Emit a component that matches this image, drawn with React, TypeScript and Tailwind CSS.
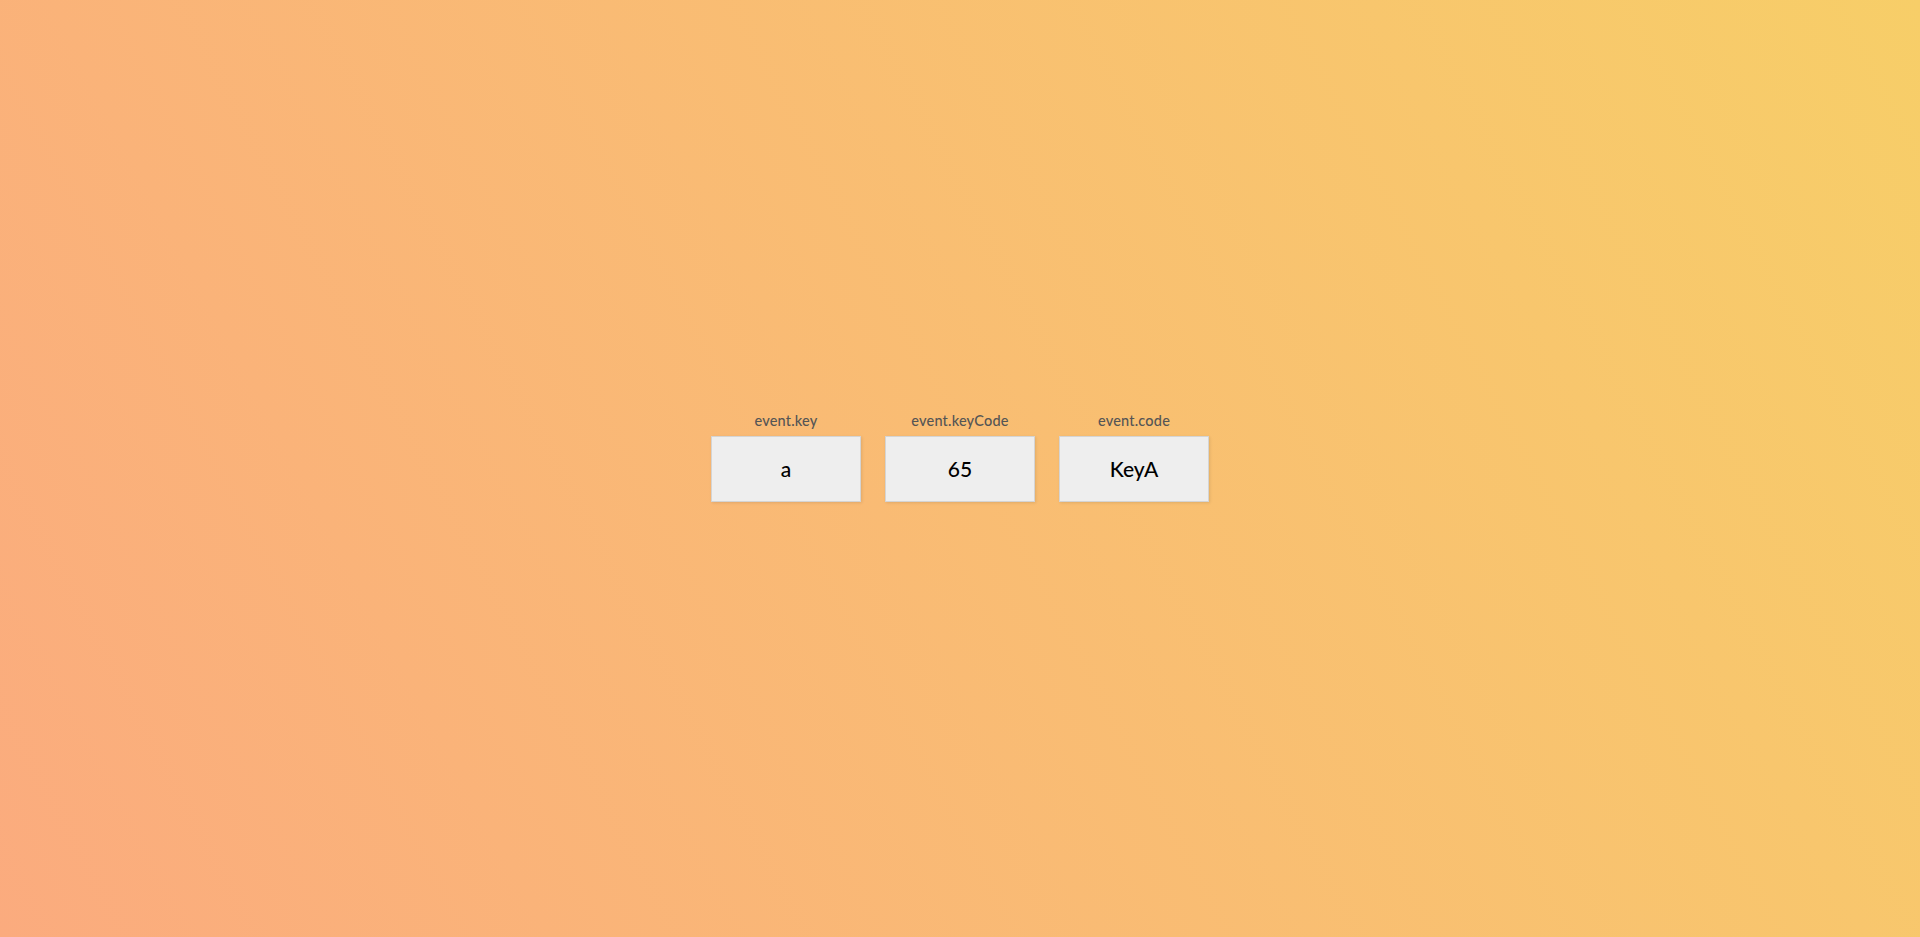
export default function App() {
  const items = [
    { label: "event.key", value: "a" },
    { label: "event.keyCode", value: "65" },
    { label: "event.code", value: "KeyA" },
  ];
  return (
    <div
      className="flex h-[937px] w-full items-center justify-center bg-[linear-gradient(62deg,#FBAB7E_0%,#F7CE68_100%)]"
      style={{ fontFamily: "Lato, 'Noto Sans', sans-serif" }}
    >
      <div className="flex gap-[24px]">
        {items.map((it) => (
          <div
            key={it.label}
            className="relative flex h-[66px] w-[150px] items-center justify-center border border-[#d4d4d4] bg-[#eeeeee] text-[21px] font-medium text-black shadow-[1px_1px_3px_rgba(0,0,0,0.1)]"
          >
            <small className="absolute left-0 top-[-27px] w-full text-center text-[14.5px] font-medium tracking-[0.2px] text-[#555]">
              {it.label}
            </small>
            {it.value}
          </div>
        ))}
      </div>
    </div>
  );
}
